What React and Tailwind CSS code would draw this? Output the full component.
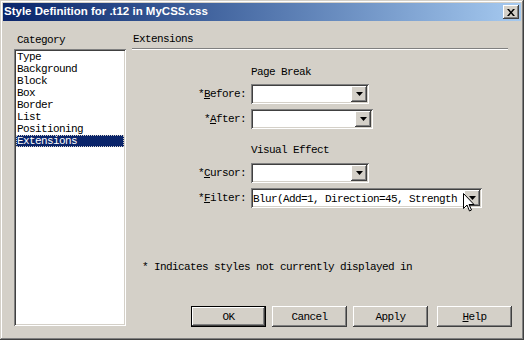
import React from "react";

const mono =
  "font-['Liberation_Mono','DejaVu_Sans_Mono',monospace] text-[11px] tracking-[-0.6px] leading-[12px] text-black";

const raised =
  "bg-[#d4d0c8] shadow-[inset_-1px_-1px_#404040,inset_1px_1px_#ffffff,inset_-2px_-2px_#808080,inset_2px_2px_#d4d0c8]";
const sunken =
  "shadow-[inset_1px_1px_#808080,inset_-1px_-1px_#ffffff,inset_2px_2px_#404040,inset_-2px_-2px_#d4d0c8]";

const categories = ["Type", "Background", "Block", "Box", "Border", "List", "Positioning", "Extensions"];

function Arrow() {
  return (
    <svg width="7" height="4" viewBox="0 0 7 4">
      <polygon points="0,0 7,0 3.5,4" fill="#000" />
    </svg>
  );
}

function Dropdown({ className, value }) {
  return (
    <div className={`flex h-[20px] bg-white p-[2px] ${sunken} ${className}`}>
      <div className={`flex-1 overflow-hidden whitespace-nowrap pt-[3px] ${mono}`}>{value}</div>
      <div className={`flex h-[16px] w-[16px] items-center justify-center ${raised}`}>
        <Arrow />
      </div>
    </div>
  );
}

function Row({ u, rest, className, mt, value }) {
  return (
    <div className={`flex items-center ${mt}`}>
      <div className={`w-[114px] text-right ${mono}`}>
        *<span className="underline">{u}</span>
        {rest}
      </div>
      <div className="w-[5px]" />
      <Dropdown className={className} value={value} />
    </div>
  );
}

function Button({ children, def }) {
  if (def) {
    return (
      <div className="h-[21px] w-[75px] border border-black">
        <div className={`flex h-full w-full items-center justify-center ${raised} ${mono}`}>{children}</div>
      </div>
    );
  }
  return (
    <div className={`flex h-[21px] w-[75px] items-center justify-center ${raised} ${mono}`}>{children}</div>
  );
}

export default function App() {
  return (
    <div className="relative h-[340px] w-[524px] overflow-hidden bg-[#d4d0c8] p-[3px] shadow-[inset_-1px_-1px_#404040,inset_1px_1px_#d4d0c8,inset_-2px_-2px_#808080,inset_2px_2px_#ffffff]">
      {/* title bar */}
      <div className="flex h-[18px] items-center bg-gradient-to-r from-[#0a246a] to-[#a6caf0] pl-[1px] pr-[2px]">
        <span className="flex-1 font-['Liberation_Sans',Arial,sans-serif] text-[11.5px] font-bold text-white">
          Style Definition for .t12 in MyCSS.css
        </span>
        <div className={`flex h-[14px] w-[16px] items-center justify-center ${raised}`}>
          <svg width="8" height="7" viewBox="0 0 8 7">
            <path d="M0 0h2l2 2.5L6 0h2L5 3.5 8 7H6L4 4.5 2 7H0l3-3.5z" fill="#000" />
          </svg>
        </div>
      </div>

      <div className="flex">
        {/* category column */}
        <div className="ml-[11px] w-[112px]">
          <div className={`mt-[13px] pl-[3px] ${mono}`}>Category</div>
          <div className={`mt-[3px] h-[277px] bg-white p-[2px] ${sunken}`}>
            {categories.map((c) =>
              c === "Extensions" ? (
                <div
                  key={c}
                  className="h-[12px] border border-dotted border-[#d4d0c8] bg-[#0a246a] font-['Liberation_Mono',monospace] text-[11px] tracking-[-0.6px] leading-[10px] text-white"
                >
                  {c}
                </div>
              ) : (
                <div key={c} className={`h-[12px] pl-[1px] ${mono}`}>
                  {c}
                </div>
              )
            )}
          </div>
        </div>

        {/* right panel */}
        <div className="ml-[6px] w-[380px]">
          <div className={`mt-[12px] pl-[1px] ${mono}`}>Extensions</div>
          <div className="mt-[3px] h-[2px] w-[376px] border-t border-b border-t-[#808080] border-b-white" />

          <div className={`mt-[16px] pl-[119px] ${mono}`}>Page Break</div>
          <Row u="B" rest="efore:" mt="mt-[6px]" className="w-[118px]" />
          <Row u="A" rest="fter:" mt="mt-[5px]" className="w-[122px]" />

          <div className={`mt-[15px] pl-[119px] ${mono}`}>Visual Effect</div>
          <Row u="C" rest="ursor:" mt="mt-[7px]" className="w-[118px]" />
          <Row
            u="F"
            rest="ilter:"
            mt="mt-[5px]"
            className="w-[231px]"
            value="Blur(Add=1, Direction=45, Strength"
          />

          <div className={`mt-[53px] pl-[10px] ${mono}`}>* Indicates styles not currently displayed in</div>

          <div className="mt-[33px] flex pl-[59px]">
            <Button def>OK</Button>
            <div className="w-[6px]" />
            <Button>Cancel</Button>
            <div className="w-[6px]" />
            <Button>Apply</Button>
            <div className="w-[9px]" />
            <Button>
              <span className="underline">H</span>elp
            </Button>
          </div>
        </div>
      </div>

      {/* mouse pointer */}
      <svg className="absolute left-[463px] top-[193px]" width="12" height="20" viewBox="0 0 12 20">
        <path
          d="M0.5 0.5v15l3.5-3.5 2.5 6 2-1-2.5-5.5h5z"
          fill="#fff"
          stroke="#000"
          strokeWidth="1"
          strokeLinejoin="miter"
        />
      </svg>
    </div>
  );
}
